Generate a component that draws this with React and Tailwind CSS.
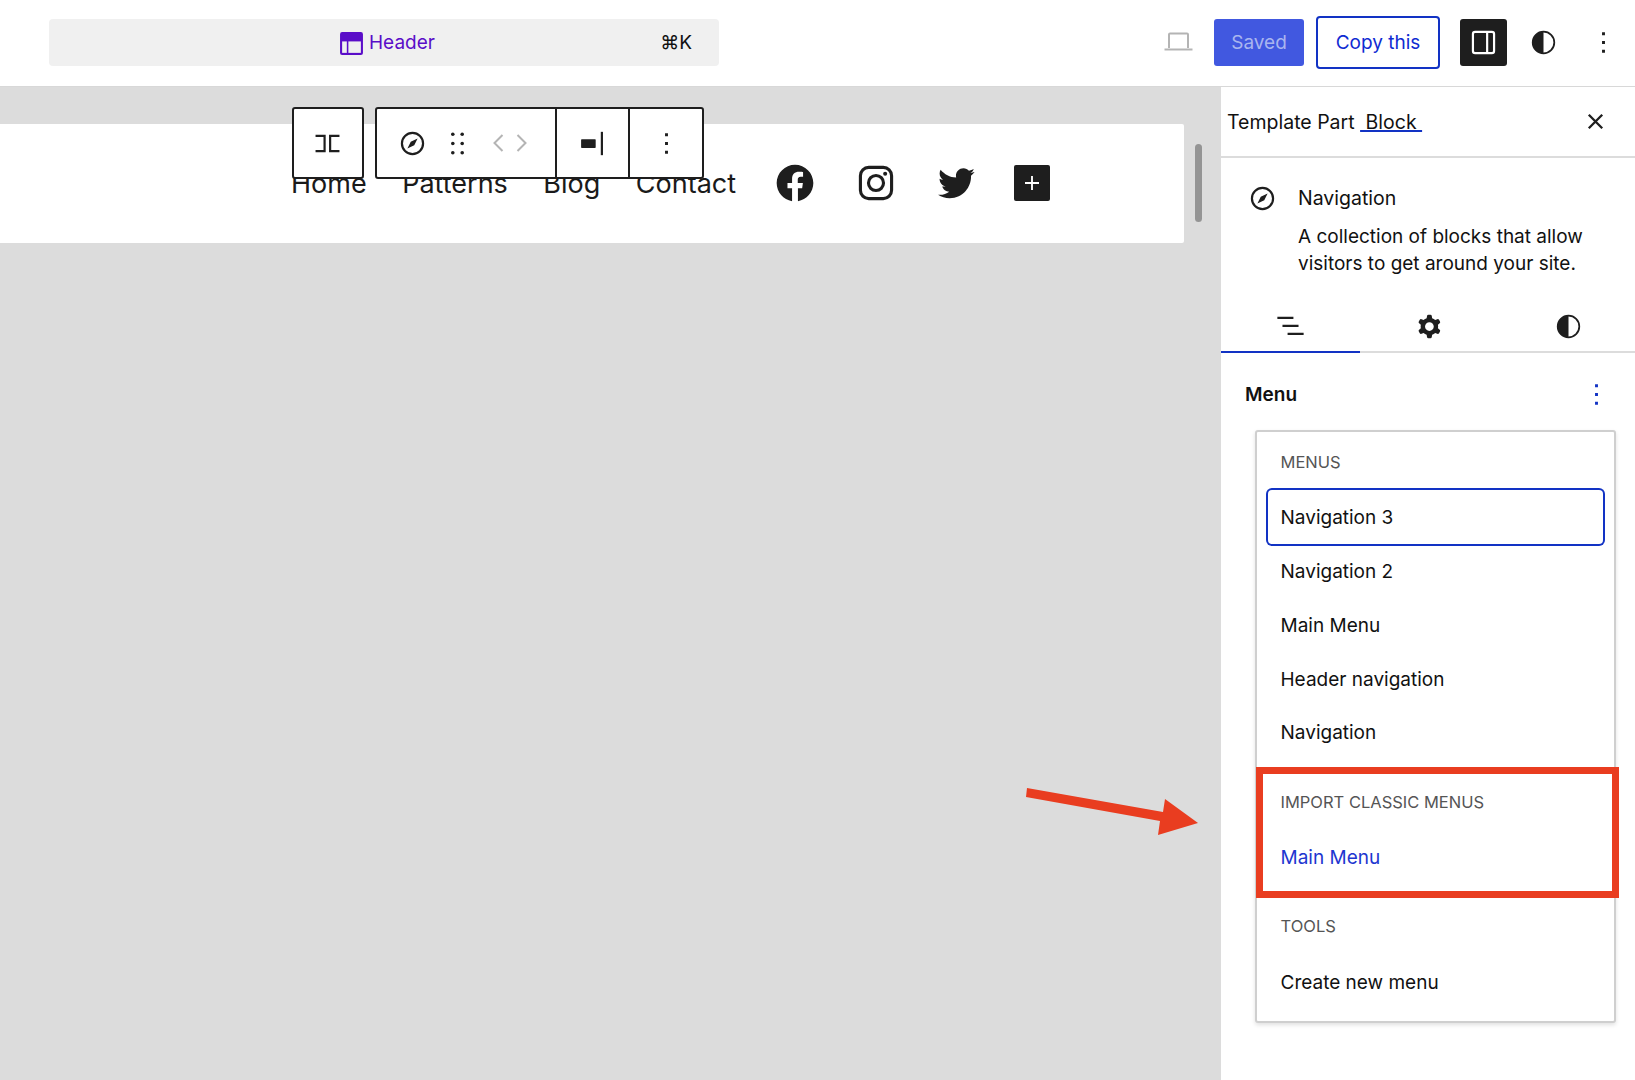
import React from 'react';

const Kebab = ({ className = '' }) => (
  <svg viewBox="0 0 24 24" className={className} fill="currentColor">
    <path d="M13 19h-2v-2h2v2zm0-6h-2v-2h2v2zm0-6h-2V5h2v2z" />
  </svg>
);

const Styles = ({ className = '' }) => (
  <svg viewBox="0 0 24 24" className={className} fill="#1e1e1e">
    <path fillRule="evenodd" d="M12 4a8 8 0 100 16 8 8 0 000-16zm0 1.2a6.8 6.8 0 010 13.6V5.200z" />
  </svg>
);

const Compass = ({ className = '' }) => (
  <svg viewBox="0 0 24 24" className={className} fill="#1e1e1e">
    <path fillRule="evenodd" d="M12 4a8 8 0 100 16 8 8 0 000-16zm0 1.500a6.500 6.500 0 110 13 6.500 6.500 0 010-13z" />
    <path d="M15.500 8.500l-2.300 4.700-2.400-2.400 4.700-2.300zM8.500 15.500l2.300-4.700 2.400 2.400-4.700 2.300z" />
  </svg>
);

const Logos = {
  facebook: 'M12 2C6.5 2 2 6.5 2 12c0 5 3.7 9.1 8.400 9.900v-7H7.900V12h2.500V9.800c0-2.500 1.500-3.900 3.800-3.900 1.100 0 2.200.2 2.200.2v2.500h-1.300c-1.200 0-1.600.8-1.600 1.600V12h2.800l-.4 2.900h-2.300v7C18.300 21.100 22 17 22 12c0-5.500-4.500-10-10-10z',
  twitter: 'M22.230 5.924c-.736.326-1.527.547-2.357.646.847-.508 1.498-1.312 1.804-2.270-.793.470-1.671.812-2.606.996C18.324 4.498 17.257 4 16.077 4c-2.266 0-4.103 1.837-4.103 4.103 0 .322.036.635.106.935C8.670 8.867 5.647 7.234 3.623 4.751c-.353.606-.556 1.311-.556 2.063 0 1.424.724 2.679 1.825 3.415-.673-.021-1.305-.206-1.859-.513v.052c0 1.988 1.414 3.647 3.292 4.023-.344.094-.707.144-1.081.144-.264 0-.521-.026-.772-.074.522 1.630 2.038 2.816 3.833 2.850-1.404 1.100-3.174 1.756-5.096 1.756-.331 0-.658-.019-.979-.057 1.816 1.164 3.973 1.843 6.290 1.843 7.547 0 11.675-6.252 11.675-11.675 0-.178-.004-.355-.012-.531.801-.578 1.496-1.301 2.046-2.127z',
};

const MenuSection = ({ title, children }) => (
  <div>
    <div className="h-[30px] mb-[13px] pl-[23.5px] flex items-center text-[16.5px] text-[#555] uppercase leading-none">
      {title}
    </div>
    {children}
  </div>
);

const MenuItem = ({ label, selected, link }) => (
  <div
    className={`h-[53.75px] mx-[11px] px-[12.5px] pt-[2px] flex items-center text-[19px] leading-none rounded-[4px] ${
      selected ? 'ring-2 ring-[#1233c4]' : ''
    } ${link ? 'text-[#1e36d0]' : 'text-[#111]'}`}
  >
    {label}
  </div>
);

const NavLink = ({ children }) => <span className="text-[27px] leading-none text-[#1a1a1a]">{children}</span>;

const TopBar = () => (
  <header className="h-[87px] shrink-0 bg-white border-b border-[#d8d8d8] flex items-center pl-[49px] pr-[14px] pb-[2px]">
    <div className="w-[670px] h-[47px] rounded-[4px] bg-[#f0f0f0] flex items-center pl-[290px] pr-[27px]">
      <svg viewBox="0 0 24 24" className="w-[25px] h-[25px] mr-[5px] mt-[2px]">
        <rect x="1" y="1" width="22" height="22" rx="2" fill="#5a0dc8" />
        <rect x="3" y="10" width="4.500" height="11" fill="#f0f0f0" />
        <rect x="9" y="10" width="12" height="11" fill="#f0f0f0" />
      </svg>
      <span className="pt-[3px] text-[19px] text-[#5a0dc8]">Header</span>
      <span className="ml-auto pt-[3px] text-[19px] text-[#111]">⌘K</span>
    </div>
    <div className="ml-auto flex items-center">
      <svg viewBox="0 0 28 22" className="w-[29px] h-[22px] mr-[21px]" fill="none" stroke="#b4b4b4" strokeWidth="2">
        <path d="M4.500 17V3.500a1 1 0 011-1h17a1 1 0 011 1V17" />
        <path d="M0 18.500h28" />
      </svg>
      <button className="w-[90px] h-[47px] pt-[2px] rounded-[3px] bg-[#4158e0] text-[#a9b5ef] text-[19px]">Saved</button>
      <button className="w-[124px] h-[53px] pt-[2px] ml-[12px] rounded-[4px] border-2 border-[#1233c4] bg-white text-[#0f2bd2] text-[19px]">
        Copy this
      </button>
      <button className="w-[47px] h-[47px] ml-[20px] rounded-[3px] bg-[#1e1e1e] flex items-center justify-center">
        <svg viewBox="0 0 24 24" className="w-[35px] h-[35px]" fill="none" stroke="#fff" strokeWidth="1.500">
          <rect x="4.750" y="4.750" width="14.500" height="14.500" rx="1.500" />
          <path d="M14.500 4.750v14.500" />
        </svg>
      </button>
      <Styles className="w-[35px] h-[35px] ml-[19px]" />
      <Kebab className="w-[35px] h-[35px] ml-[25px] text-[#1e1e1e]" />
    </div>
  </header>
);

const BlockToolbar = () => (
  <div className="absolute left-[292px] top-[20px] z-10 flex gap-[11px] h-[72px]">
    <div className="w-[72px] border-2 border-[#1e1e1e] rounded-[3px] bg-white flex items-center justify-center">
      <svg viewBox="0 0 24 24" className="w-[35px] h-[35px] -ml-[1px]" fill="none" stroke="#1e1e1e" strokeWidth="1.500">
        <path d="M3.800 6.750H10v10.500H3.800M20.200 6.750H13.800v10.500h6.400" />
      </svg>
    </div>
    <div className="border-2 border-[#1e1e1e] rounded-[3px] bg-white flex items-stretch">
      <div className="w-[178px] flex items-center pl-[18px]">
        <Compass className="w-[35px] h-[35px]" />
        <svg viewBox="0 0 35 35" className="w-[35px] h-[35px] ml-[10px]" fill="#1e1e1e">
          <circle cx="12.800" cy="8.300" r="1.800" />
          <circle cx="22.200" cy="8.300" r="1.800" />
          <circle cx="12.800" cy="17.500" r="1.800" />
          <circle cx="22.200" cy="17.500" r="1.800" />
          <circle cx="12.800" cy="26.700" r="1.800" />
          <circle cx="22.200" cy="26.700" r="1.800" />
        </svg>
        <svg viewBox="0 0 34 20" className="w-[34px] h-[20px] ml-[18px]" fill="none" stroke="#b4b4b4" strokeWidth="2">
          <path d="M9.500 2L1.500 10l8 8M24.500 2l8 8-8 8" />
        </svg>
      </div>
      <div className="w-[73px] border-l-2 border-[#1e1e1e] flex items-center justify-center">
        <svg viewBox="0 0 24 24" className="w-[35px] h-[35px] ml-[1px]" fill="#1e1e1e">
          <rect x="3.500" y="9" width="10" height="6" rx="0.500" />
          <rect x="17" y="4" width="1.500" height="16" />
        </svg>
      </div>
      <div className="w-[74px] border-l-2 border-[#1e1e1e] flex items-center justify-center">
        <Kebab className="w-[35px] h-[35px] text-[#1e1e1e]" />
      </div>
    </div>
  </div>
);

const Canvas = () => (
  <main className="relative flex-1 bg-[#dcdcdc] pt-[37px] flex items-start">
    <BlockToolbar />
    <div className="w-[1184px] h-[119px] bg-white rounded-r-[2px] flex items-center pl-[291px]">
      <div className="flex items-center gap-[35.5px]">
        <NavLink>Home</NavLink>
        <NavLink>Patterns</NavLink>
        <NavLink>Blog</NavLink>
        <NavLink>Contact</NavLink>
      </div>
      <svg viewBox="0 0 24 24" className="w-[44px] h-[44px] ml-[37px] mb-[2px]" fill="#1e1e1e">
        <path d={Logos.facebook} />
      </svg>
      <svg viewBox="0 0 24 24" className="w-[44px] h-[44px] ml-[37px] mb-[2px]" fill="none" stroke="#1e1e1e" strokeWidth="1.700">
        <rect x="3.500" y="3.500" width="17" height="17" rx="4.500" />
        <circle cx="12" cy="12" r="4.100" />
        <circle cx="17" cy="7" r="1.100" fill="#1e1e1e" stroke="none" />
      </svg>
      <svg viewBox="0 0 24 24" className="w-[44px] h-[44px] ml-[36px] mb-[2px]" fill="#1e1e1e">
        <path d={Logos.twitter} />
      </svg>
      <div className="w-[36px] h-[36px] ml-[36px] mb-[2px] rounded-[2px] bg-[#1e1e1e] flex items-center justify-center">
        <svg viewBox="0 0 24 24" className="w-[28px] h-[28px]" fill="#fff">
          <path d="M18 11.200h-5.200V6h-1.600v5.200H6v1.600h5.200V18h1.600v-5.200H18z" />
        </svg>
      </div>
    </div>
    <div className="w-[7px] h-[78px] ml-[11px] mt-[20px] rounded-full bg-[#949494]" />
  </main>
);

const Sidebar = () => (
  <aside className="w-[414px] shrink-0 bg-white">
    <div className="h-[71px] border-b-2 border-[#dcdcdc] flex items-center pl-[6px] pr-[22px]">
      <span className="pt-[3px] text-[19.5px] text-[#111] whitespace-pre">
        Template Part{' '}
        <span className="underline decoration-[#1233c4] decoration-2 underline-offset-[1px] [text-decoration-skip-ink:none]"> Block </span>
      </span>
      <svg viewBox="0 0 24 24" className="ml-auto w-[35px] h-[35px]" fill="none" stroke="#1e1e1e" strokeWidth="1.600">
        <path d="M7.400 7.400l9.200 9.200M16.600 7.400l-9.200 9.200" />
      </svg>
    </div>
    <div className="flex pl-[24px] pt-[27px] pr-[20px] h-[146px]">
      <Compass className="w-[35px] h-[35px] shrink-0 -mt-[4px]" />
      <div className="ml-[18px] text-[19px] leading-[27px] text-[#111]">
        <div className="mb-[11px] text-[19.5px]">Navigation</div>
        <div>A collection of blocks that allow visitors to get around your site.</div>
      </div>
    </div>
    <div className="h-[49px] border-b-2 border-[#dcdcdc] flex">
      {[
        <svg key="list" viewBox="0 0 24 24" className="w-[35px] h-[35px]" fill="#1e1e1e">
          <path d="M3 6h11v1.500H3V6zm3.500 5.500h11V13h-11v-1.500zM21 17H10v1.500h11V17z" />
        </svg>,
        <svg key="gear" viewBox="0 0 24 24" className="w-[35px] h-[35px]" fill="#1e1e1e">
          <path fillRule="evenodd" d="M10.289 4.836A1 1 0 0111.275 4h1.306a1 1 0 01.987.836l.244 1.466c.787.26 1.503.679 2.108 1.218l1.393-.522a1 1 0 011.216.437l.653 1.130a1 1 0 01-.23 1.273l-1.148.944a6.025 6.025 0 010 2.435l1.149.946a1 1 0 01.23 1.272l-.653 1.130a1 1 0 01-1.216.437l-1.394-.522c-.605.54-1.320.958-2.108 1.218l-.244 1.466a1 1 0 01-.987.836h-1.306a1 1 0 01-.986-.836l-.244-1.466a5.995 5.995 0 01-2.108-1.218l-1.394.522a1 1 0 01-1.217-.436l-.653-1.131a1 1 0 01.23-1.272l1.149-.946a6.026 6.026 0 010-2.435l-1.148-.944a1 1 0 01-.23-1.272l.653-1.131a1 1 0 011.217-.437l1.393.522a5.994 5.994 0 012.108-1.218l.244-1.466zM14.929 12a3 3 0 11-6 0 3 3 0 016 0z" />
        </svg>,
        <Styles key="styles" className="w-[35px] h-[35px]" />,
      ].map((icon, i) => (
        <div
          key={i}
          className={`w-[139px] shrink-0 h-[49px] pb-[4px] flex items-center justify-center ${i === 0 ? 'border-b-2 border-[#1233c4]' : ''}`}
        >
          {icon}
        </div>
      ))}
    </div>
    <div className="h-[77px] flex items-center pt-[8px] pl-[24px] pr-[21px]">
      <span className="text-[19px] font-semibold text-[#111]">Menu</span>
      <Kebab className="ml-auto w-[35px] h-[35px] text-[#1233c4] -mt-[3px]" />
    </div>
    <div className="relative ml-[34px] w-[361px] h-[593px] border-2 border-[#cfcfcf] rounded-[3px] bg-white shadow-[0_2px_4px_rgba(0,0,0,0.12)] pt-[15px]">
      <div className="flex flex-col gap-[28px]">
        <MenuSection title="Menus">
          <MenuItem label="Navigation 3" selected />
          <MenuItem label="Navigation 2" />
          <MenuItem label="Main Menu" />
          <MenuItem label="Header navigation" />
          <MenuItem label="Navigation" />
        </MenuSection>
        <MenuSection title="Import classic menus">
          <MenuItem label="Main Menu" link />
        </MenuSection>
        <MenuSection title="Tools">
          <MenuItem label="Create new menu" />
        </MenuSection>
      </div>
      <div className="absolute left-[-1px] top-[335px] w-[363px] h-[131px] border-[7px] border-[#e93d20]" />
    </div>
  </aside>
);

export default function App() {
  return (
    <div className="relative w-[1635px] h-[1080px] overflow-hidden bg-white flex flex-col font-['Inter',sans-serif]">
      <TopBar />
      <div className="flex flex-1 min-h-0">
        <Canvas />
        <Sidebar />
      </div>
      <svg viewBox="0 0 180 52" className="absolute left-[1022px] top-[785px] w-[180px] h-[52px]" fill="#e93d20">
        <polygon points="5,3 141,27 143,14 176,38 136,50 138,36 4,12" />
      </svg>
    </div>
  );
}
